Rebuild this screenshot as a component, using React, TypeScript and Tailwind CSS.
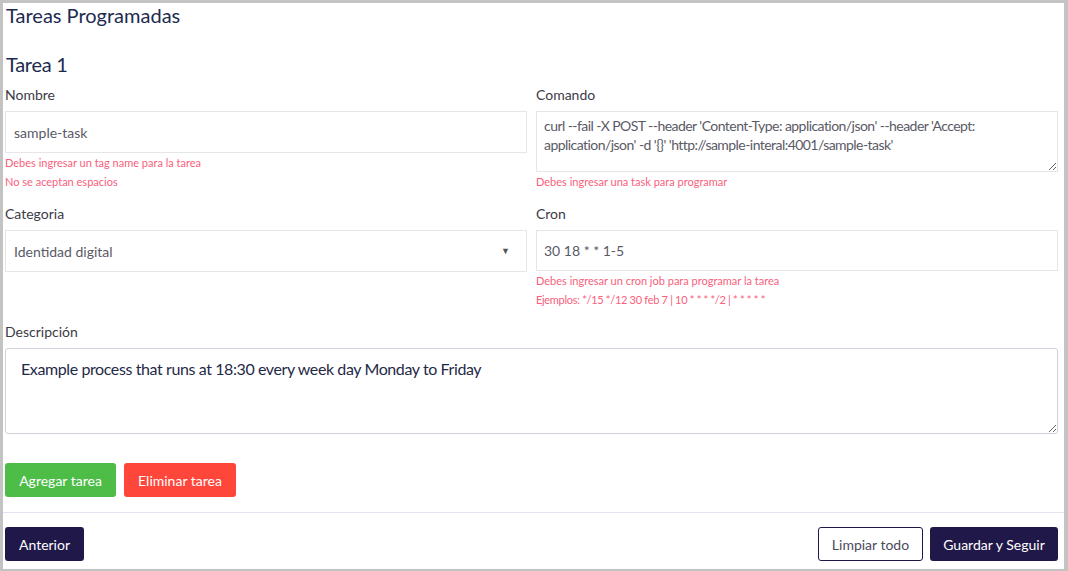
import React from "react";

const font = { fontFamily: "Lato, 'Open Sans', sans-serif" };

function Label({ children }: { children: React.ReactNode }) {
  return <div className="text-[14px] leading-[21px] text-[#3b3b45]">{children}</div>;
}

function Err({ children }: { children: React.ReactNode }) {
  return <div className="text-[11px] leading-[19px] text-[#f9607c]">{children}</div>;
}

export default function App() {
  return (
    <div
      className="w-[1068px] h-[571px] bg-white border-t-[3px] border-l-[3px] border-r-4 border-b-2 border-[#c3c3c3] overflow-hidden"
      style={font}
    >
      <div className="flex flex-col h-full">
        <div className="pl-[2px] pr-[6px]">
          <h1 className="text-[20px] leading-[24px] text-[#1c2b50] pl-[1px]">Tareas Programadas</h1>
          <h2 className="mt-[25px] text-[20px] leading-[24px] text-[#1c2b50] pl-[1px] tracking-[-0.3px]">Tarea 1</h2>

          <div className="grid grid-cols-2 gap-x-[9px] mt-[8px]">
            <div>
              <Label>Nombre</Label>
              <input
                readOnly
                defaultValue="sample-task"
                className="mt-[6px] w-full h-[42px] border border-[#e6e6e6] px-[8px] text-[14px] text-[#5a5a66] outline-none"
                style={font}
              />
              <Err>Debes ingresar un tag name para la tarea</Err>
              <Err>No se aceptan espacios</Err>
            </div>
            <div>
              <Label>Comando</Label>
              <textarea
                readOnly
                defaultValue={"curl --fail -X POST --header 'Content-Type: application/json' --header 'Accept: application/json' -d '{}' 'http://sample-interal:4001/sample-task'"}
                className="mt-[6px] block w-full h-[61px] border border-[#e6e6e6] px-[7px] pt-[4px] text-[14px] leading-[19px] tracking-[-0.55px] text-[#5a5a66] outline-none resize-y"
                style={font}
              />
              <Err>Debes ingresar una task para programar</Err>
            </div>

            <div className="mt-[12px]">
              <Label>Categoria</Label>
              <div className="mt-[6px] w-full h-[42px] border border-[#e6e6e6] px-[8px] flex items-center justify-between text-[14px] text-[#5a5a66]">
                <span>Identidad digital</span>
                <span className="text-[9px] text-[#555] mr-[8px]">▼</span>
              </div>
            </div>
            <div className="mt-[12px]">
              <Label>Cron</Label>
              <input
                readOnly
                defaultValue="30 18 * * 1-5"
                className="mt-[6px] w-full h-[41px] border border-[#e6e6e6] px-[7px] text-[14px] text-[#5a5a66] outline-none"
                style={font}
              />
              <Err>Debes ingresar un cron job para programar la tarea</Err>
              <div className="text-[11px] leading-[19px] text-[#f9607c] tracking-[-0.3px]">Ejemplos: */15 */12 30 feb 7 | 10 * * * */2 | * * * * *</div>
            </div>
          </div>

          <div className="mt-[12px]">
            <Label>Descripción</Label>
            <textarea
              readOnly
              defaultValue="Example process that runs at 18:30 every week day Monday to Friday"
              className="mt-[6px] block w-full h-[86px] border border-[#cfd2da] rounded-[3px] px-[15px] pt-[10px] text-[16px] leading-[20px] tracking-[-0.4px] text-[#1f2a48] outline-none resize-y"
              style={font}
            />
          </div>

          <div className="mt-[29px] flex gap-[8px]">
            <button className="h-[34px] w-[111px] rounded-[3px] bg-[#4dbd48] text-white text-[14px]">Agregar tarea</button>
            <button className="h-[34px] w-[112px] rounded-[3px] bg-[#ff463a] text-white text-[14px]">Eliminar tarea</button>
          </div>
        </div>

        <div className="mt-[15px] border-t border-[#e4e3f0]" />

        <div className="pl-[2px] pr-[6px] mt-[14px] flex items-center justify-between">
          <button className="h-[34px] w-[79px] rounded-[3px] bg-[#21184a] text-white text-[14px]">Anterior</button>
          <div className="flex gap-[7px]">
            <button className="h-[34px] w-[105px] rounded-[3px] border border-[#21184a] bg-white text-[#4b4b5c] text-[14px]">Limpiar todo</button>
            <button className="h-[34px] w-[128px] rounded-[3px] bg-[#21184a] text-white text-[14px]">Guardar y Seguir</button>
          </div>
        </div>
      </div>
    </div>
  );
}
